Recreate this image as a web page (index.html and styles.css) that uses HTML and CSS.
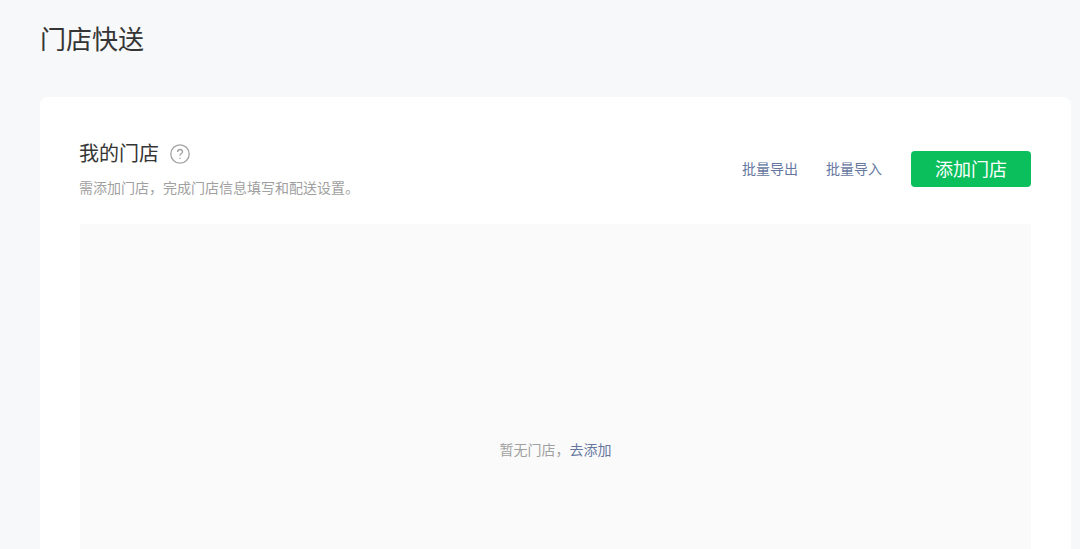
FILE: index.html
```html
<!DOCTYPE html>
<html lang="zh-CN">
<head>
  <meta charset="UTF-8">
  <title>门店快送</title>
  <link rel="stylesheet" href="styles.css">
</head>
<body>
  <div class="page">
    <h1 class="page-title">门店快送</h1>

    <div class="card">
      <div class="card-head">
        <div class="head-info">
          <div class="head-title">
            <h2>我的门店</h2>
            <svg class="help-icon" width="20" height="20" viewBox="0 0 20 20" fill="none">
              <circle cx="10" cy="10" r="9.2" stroke="#a3a3a3" stroke-width="1.3"/>
              <path d="M7.6 8c0-1.5 1.1-2.5 2.5-2.5s2.4 1 2.4 2.2c0 1.9-2.5 1.9-2.5 4" stroke="#a3a3a3" stroke-width="1.3" fill="none"/>
              <circle cx="10" cy="14.2" r="0.8" fill="#a3a3a3"/>
            </svg>
          </div>
          <p class="head-desc">需添加门店，完成门店信息填写和配送设置。</p>
        </div>
        <div class="head-actions">
          <a class="link">批量导出</a>
          <a class="link">批量导入</a>
          <button class="add-btn">添加门店</button>
        </div>
      </div>

      <div class="empty">
        <span>暂无门店，<a class="link">去添加</a></span>
      </div>
    </div>
  </div>
</body>
</html>
```

FILE: styles.css
```css
html,
body {
  height: 100%;
}

body {
  margin: 0;
  background-color: #f7f8fa;
  color: #353535;
  font-family: "Liberation Sans", "Noto Sans CJK SC", sans-serif;
  overflow: hidden;
}

.page {
  padding: 21px 9px 0 40px;
}

.page-title {
  margin: 0 0 38px;
  font-size: 26px;
  font-weight: 400;
  line-height: 38px;
  color: #353535;
}

.card {
  background-color: #fff;
  border-radius: 8px 8px 0 0;
  padding: 43px 40px 0 39px;
}

.card-head {
  display: flex;
  justify-content: space-between;
  align-items: center;
  margin-bottom: 26px;
}

.head-title {
  display: flex;
  align-items: center;
}

.head-title h2 {
  margin: 0;
  font-size: 20px;
  font-weight: 400;
  line-height: 28px;
  color: #353535;
}

.help-icon {
  margin-left: 11px;
}

.head-desc {
  margin: 10px 0 0;
  font-size: 14px;
  line-height: 20px;
  color: #a0a0a0;
}

.head-actions {
  display: flex;
  align-items: center;
}

.link {
  font-size: 14px;
  color: #66779f;
}

.head-actions .link {
  margin: 0 28px 2px 0;
}

.add-btn {
  width: 120px;
  height: 36px;
  margin-left: 1px;
  border: none;
  border-radius: 4px;
  background-color: #0bbf5d;
  color: #fff;
  font-family: inherit;
  font-size: 18px;
  padding: 0 0 2px;
}

.empty {
  display: flex;
  justify-content: center;
  align-items: center;
  height: 450px;
  margin-left: 1px;
  background-color: #fafafa;
  font-size: 14px;
  color: #a0a0a0;
}
```
